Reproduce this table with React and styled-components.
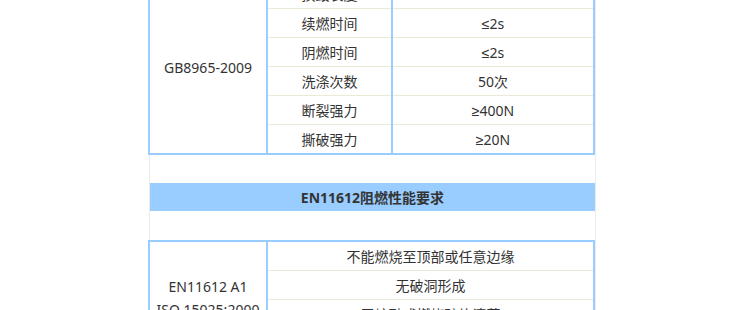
import React from "react";
import styled, { createGlobalStyle } from "styled-components";

const Global = createGlobalStyle`
  html, body {
    margin: 0;
    padding: 0;
    background: #ffffff;
  }
  body {
    font-family: "Noto Sans", "Liberation Sans", "Noto Sans CJK SC", sans-serif;
    color: #333333;
    overflow: hidden;
  }
`;

const BLUE = "#99ccff";
const RULE = "#ecead7";

const Panel = styled.section`
  box-sizing: border-box;
  width: 447px;
  margin: -22px 0 0 149px;
  border-left: 1px solid #ececec;
  border-right: 1px solid #ececec;
  background: #ffffff;
`;

const Sheet = styled.div`
  box-sizing: border-box;
  width: 447px;
  margin-left: -2px;
  display: grid;
  grid-template-columns: ${(p) => p.$cols};
  grid-template-rows: 28px repeat(${(p) => p.$rows - 1}, 29px);
  column-gap: 2px;
  background: ${BLUE};
  border: 2px solid ${BLUE};
`;

const Cell = styled.div`
  box-sizing: border-box;
  grid-column: ${(p) => p.$col};
  grid-row: ${(p) => p.$row};
  display: flex;
  align-items: center;
  justify-content: center;
  padding-top: 1px;
  background: #ffffff;
  font-size: 14px;
  line-height: 20px;
  color: #333333;
  white-space: nowrap;
  border-top: ${(p) => (p.$row === 1 ? "none" : `1px solid ${RULE}`)};
`;

const StandardCell = styled.div`
  grid-row: 1 / -1;
  display: flex;
  flex-direction: column;
  align-items: center;
  justify-content: center;
  padding-top: 2px;
  background: #ffffff;
  font-size: 14px;
  line-height: 23px;
  color: #333333;
  white-space: nowrap;
`;

const Banner = styled.h3`
  box-sizing: border-box;
  margin: 28px 0 29px;
  height: 28px;
  display: flex;
  align-items: center;
  justify-content: center;
  background: ${BLUE};
  font-size: 14px;
  font-weight: bold;
  color: #333333;
`;

const gbRows = [
  ["损毁长度", "≤150mm"],
  ["续燃时间", "≤2s"],
  ["阴燃时间", "≤2s"],
  ["洗涤次数", "50次"],
  ["断裂强力", "≥400N"],
  ["撕破强力", "≥20N"],
];

const enRows = [
  "不能燃烧至顶部或任意边缘",
  "无破洞形成",
  "无熔融或燃烧碎片滴落",
  "平均续燃时间≤2s",
  "平均阴燃时间≤2s",
  "余辉不蔓延至未损区域",
  "洗涤后仍满足以上要求",
];

const enStandard = [
  "EN11612 A1",
  "ISO 15025:2000",
  "程序A",
  "表面点火",
  "EN11612 A2",
  "边缘点火",
];

export default function App() {
  return (
    <>
      <Global />
      <Panel>
        <Sheet $cols="116px 123px 200px" $rows={gbRows.length}>
          <StandardCell>GB8965-2009</StandardCell>
          {gbRows.map(([item, value], i) => (
            <React.Fragment key={item}>
              <Cell $col={2} $row={i + 1}>{item}</Cell>
              <Cell $col={3} $row={i + 1}>{value}</Cell>
            </React.Fragment>
          ))}
        </Sheet>

        <Banner>EN11612阻燃性能要求</Banner>

        <Sheet $cols="116px 325px" $rows={enRows.length}>
          <StandardCell>
            {enStandard.map((line) => (
              <span key={line}>{line}</span>
            ))}
          </StandardCell>
          {enRows.map((text, i) => (
            <Cell key={text} $col={2} $row={i + 1}>
              {text}
            </Cell>
          ))}
        </Sheet>
      </Panel>
    </>
  );
}
